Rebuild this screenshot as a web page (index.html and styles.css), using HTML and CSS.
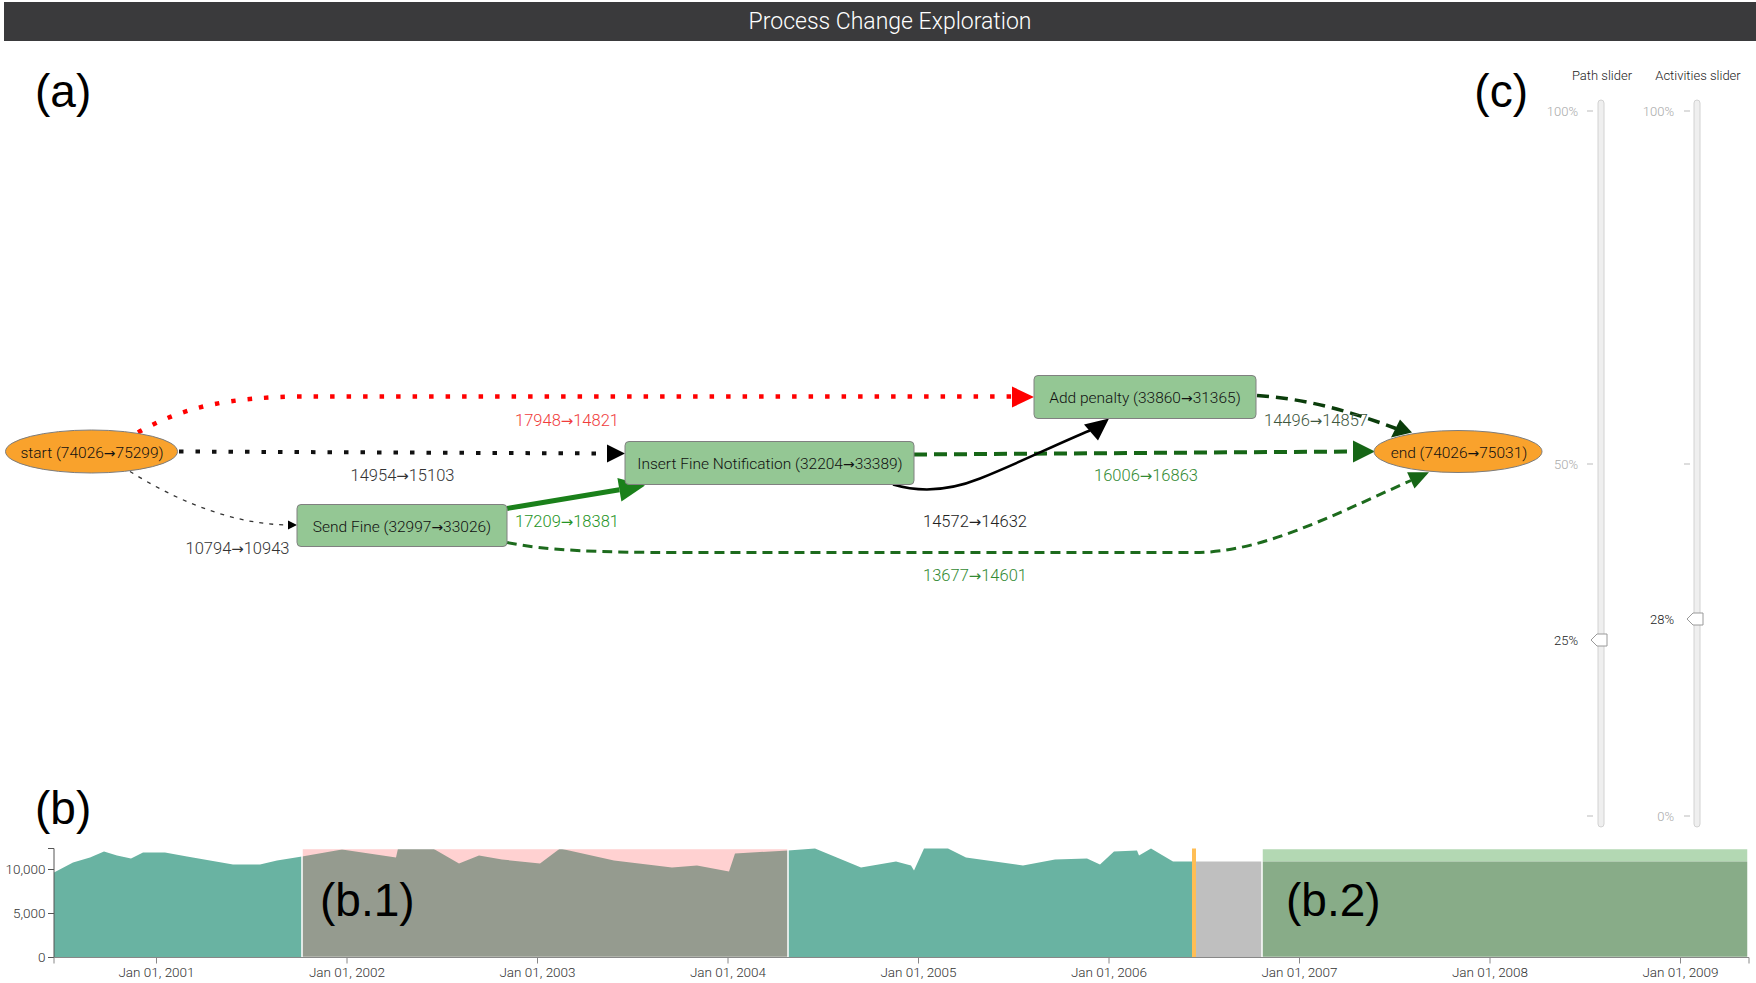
FILE: index.html
```html
<!DOCTYPE html>
<html lang="en">
<head>
<meta charset="utf-8">
<title>Process Change Exploration</title>
<link rel="stylesheet" href="styles.css">
</head>
<body>
<header class="topbar"><h1 class="topbar-title">Process Change Exploration</h1></header>

<main class="workspace">
  <section class="graph-panel">
    <div class="panel-labels">
      <span class="panel-tag">(a)</span>
      <span class="panel-tag panel-tag-c">(c)</span>
    </div>
    <svg class="graph" width="1554" height="656.5" viewBox="0 116.5 1554 656.5">
      <!-- edges -->
      <path class="edge e-red" d="M138,432 C185,405 232,397 300,396 L1012,396"/>
      <polygon class="head-red" points="1012,386 1034,396.5 1012,407"/>

      <path class="edge e-blackdot" d="M179,451 L607,453"/>
      <polygon class="head-black" points="607,444 625,453 607,462"/>

      <path class="edge e-thin" d="M130,471 C170,496 228,524 289,524.5"/>
      <polygon class="head-black" points="288,520 297,524.5 288,529"/>

      <path class="edge e-green" d="M507,508 L619.4,489.3"/>
      <polygon class="head-green" points="621.4,501.1 645,485 617.4,477.5"/>

      <path class="edge e-green-bottom" d="M507,542 C545,550 600,552 680,552 L1195,552 C1262,552 1330,516 1411,480"/>
      <polygon class="head-green-dark" points="1414.5,488.1 1429,471.7 1407.1,471.7"/>

      <path class="edge e-green-mid" d="M914,454 L1353,451"/>
      <polygon class="head-green-dark" points="1353,440 1375,451 1353,462"/>

      <path class="edge e-black" d="M893,484 C920,492 950,490 980,478 C1020,462 1058,443 1090,430"/>
      <polygon class="head-black" points="1098,440 1109,418 1084,424"/>

      <path class="edge e-darkgreen" d="M1257,395 C1300,398 1340,407 1396,428"/>
      <polygon class="head-darkest" points="1391,437 1412,432 1400,419"/>

      <!-- nodes -->
      <ellipse class="node-event" cx="91.5" cy="451" rx="86" ry="21.5"/>
      <rect class="node-activity" x="297" y="504" width="210" height="42" rx="4"/>
      <rect class="node-activity" x="625" y="441" width="289" height="43" rx="4"/>
      <rect class="node-activity" x="1034" y="375" width="222" height="43" rx="4"/>
      <ellipse class="node-event" cx="1458" cy="451" rx="84" ry="21"/>

      <text class="node-label" x="92" y="457">start (74026<tspan class="arr">→</tspan>75299)</text>
      <text class="node-label" x="402" y="531">Send Fine (32997<tspan class="arr">→</tspan>33026)</text>
      <text class="node-label" x="770" y="468.5">Insert Fine Notification (32204<tspan class="arr">→</tspan>33389)</text>
      <text class="node-label" x="1145" y="402.5">Add penalty (33860<tspan class="arr">→</tspan>31365)</text>
      <text class="node-label" x="1459" y="457">end (74026<tspan class="arr">→</tspan>75031)</text>

      <!-- edge labels -->
      <text class="edge-label lbl-red" x="567" y="425">17948<tspan class="arr">→</tspan>14821</text>
      <text class="edge-label lbl-gray" x="402.5" y="480.7">14954<tspan class="arr">→</tspan>15103</text>
      <text class="edge-label lbl-gray" x="237.5" y="553.7">10794<tspan class="arr">→</tspan>10943</text>
      <text class="edge-label lbl-green" x="567" y="526.2">17209<tspan class="arr">→</tspan>18381</text>
      <text class="edge-label lbl-dark" x="975" y="526.2">14572<tspan class="arr">→</tspan>14632</text>
      <text class="edge-label lbl-green2" x="1146" y="480.7">16006<tspan class="arr">→</tspan>16863</text>
      <text class="edge-label lbl-green2" x="975" y="580.7">13677<tspan class="arr">→</tspan>14601</text>
      <text class="edge-label lbl-greengray" x="1316" y="425.7">14496<tspan class="arr">→</tspan>14857</text>
    </svg>
    <div class="panel-label-b"><span class="panel-tag">(b)</span></div>
  </section>

  <aside class="sliders">
    <div class="slider">
      <div class="slider-title">Path slider</div>
      <svg class="slider-svg" width="96" height="749.5" viewBox="1554 84 96 749.5">
        <rect class="track" x="1598" y="100" width="6" height="727" rx="3"/>
        <line class="tick" x1="1587" y1="111" x2="1593" y2="111"/>
        <line class="tick" x1="1587" y1="464" x2="1593" y2="464"/>
        <line class="tick" x1="1587" y1="816" x2="1593" y2="816"/>
        <text class="tick-label" x="1578" y="115.6">100%</text>
        <text class="tick-label" x="1578" y="468.6">50%</text>
        <polygon class="handle" points="1591,640 1597,634 1607,634 1607,646 1597,646"/>
        <text class="handle-label" x="1578" y="644.6">25%</text>
      </svg>
    </div>
    <div class="slider">
      <div class="slider-title">Activities slider</div>
      <svg class="slider-svg" width="96" height="749.5" viewBox="1650 84 96 749.5">
        <rect class="track" x="1694" y="100" width="6" height="727" rx="3"/>
        <line class="tick" x1="1684" y1="111" x2="1690" y2="111"/>
        <line class="tick" x1="1684" y1="464" x2="1690" y2="464"/>
        <line class="tick" x1="1684" y1="816" x2="1690" y2="816"/>
        <text class="tick-label" x="1674" y="115.6">100%</text>
        <text class="tick-label" x="1674" y="820.6">0%</text>
        <polygon class="handle" points="1687,619 1693,613 1703,613 1703,625 1693,625"/>
        <text class="handle-label" x="1674" y="623.6">28%</text>
      </svg>
    </div>
  </aside>
</main>

<section class="timeline">
  <svg class="chart" width="1756" height="149.5" viewBox="0 833.5 1756 149.5">
    <defs>
      <clipPath id="sel1"><rect x="302" y="848" width="486" height="109"/></clipPath>
      <path id="areaShape" d="M54,957 L54,872 L73,862 L90,857 L104,851 L117,855 L131,858 L143,852 L165,852 L187,856 L233,864 L260,864 L277,860 L302,856 L342,849 L396,857 L398,848 L433,848 L459,863 L479,855 L502,859 L540,863 L560,848 L614,860 L672,867 L697,865 L729,871 L735,853 L788,850 L815,848 L861,867 L896,861 L911,865 L914,870 L924,848 L948,848 L966,857 L1023,865 L1055,859 L1087,858 L1100,864 L1114,851 L1137,850 L1139,855 L1151,848 L1173,861 L1192,861 L1192,957 Z"/>
    </defs>
    <use href="#areaShape" class="area"/>
    <rect class="sel1-bg" x="302" y="848" width="486" height="109"/>
    <use href="#areaShape" class="area-sel1" clip-path="url(#sel1)"/>
    <rect class="sel-border" x="302" y="848" width="486" height="109"/>

    <rect class="gap" x="1192" y="861" width="70" height="96"/>
    <rect class="marker" x="1192" y="848" width="4" height="109"/>

    <rect class="sel2-top" x="1262" y="848" width="486" height="13"/>
    <rect class="sel2-body" x="1262" y="861" width="486" height="96"/>
    <rect class="sel-border" x="1262" y="848" width="486" height="109"/>

    <text class="sel-tag" x="320" y="915">(b.1)</text>
    <text class="sel-tag" x="1286" y="915">(b.2)</text>

    <path class="axis-y" d="M48,848 H54 V957 H48"/>
    <line class="axis-y" x1="48" y1="869" x2="54" y2="869"/>
    <line class="axis-y" x1="48" y1="913" x2="54" y2="913"/>
    <text class="axis-label y-label" x="45.5" y="873.8">10,000</text>
    <text class="axis-label y-label" x="45.5" y="917.8">5,000</text>
    <text class="axis-label y-label" x="45.5" y="961.8">0</text>

    <path class="axis-x" d="M54,963 V957 H1749 V963"/>
    <g class="axis-x">
      <line x1="156.5" y1="957" x2="156.5" y2="963"/>
      <line x1="347" y1="957" x2="347" y2="963"/>
      <line x1="537.5" y1="957" x2="537.5" y2="963"/>
      <line x1="728" y1="957" x2="728" y2="963"/>
      <line x1="918.5" y1="957" x2="918.5" y2="963"/>
      <line x1="1109" y1="957" x2="1109" y2="963"/>
      <line x1="1299.5" y1="957" x2="1299.5" y2="963"/>
      <line x1="1490" y1="957" x2="1490" y2="963"/>
      <line x1="1680.5" y1="957" x2="1680.5" y2="963"/>
    </g>
    <text class="axis-label x-label" x="156.5" y="976">Jan 01, 2001</text>
    <text class="axis-label x-label" x="347" y="976">Jan 01, 2002</text>
    <text class="axis-label x-label" x="537.5" y="976">Jan 01, 2003</text>
    <text class="axis-label x-label" x="728" y="976">Jan 01, 2004</text>
    <text class="axis-label x-label" x="918.5" y="976">Jan 01, 2005</text>
    <text class="axis-label x-label" x="1109" y="976">Jan 01, 2006</text>
    <text class="axis-label x-label" x="1299.5" y="976">Jan 01, 2007</text>
    <text class="axis-label x-label" x="1490" y="976">Jan 01, 2008</text>
    <text class="axis-label x-label" x="1680.5" y="976">Jan 01, 2009</text>
  </svg>
</section>
</body>
</html>
```

FILE: styles.css
```css
* { box-sizing: border-box; }
html, body { margin: 0; padding: 0; background: #ffffff; }
body {
  width: 1756px;
  height: 983px;
  overflow: hidden;
  font-family: "Liberation Sans", Arial, Helvetica, sans-serif;
}

.light {
  font-family: Roboto, "Liberation Sans", sans-serif;
  font-weight: 300;
}

.topbar {
  margin: 2px 0 0 4px;
  height: 39px;
  background: #3a3a3c;
  display: flex;
  align-items: center;
  justify-content: center;
}
.topbar-title {
  margin: 0;
  padding-left: 20px;
  font-family: Roboto, "Liberation Sans", sans-serif;
  font-size: 23px;
  font-weight: 300;
  color: #ffffff;
  line-height: 26px;
}

.workspace {
  display: grid;
  grid-template-columns: 1554px 202px;
  height: 792.5px;
}

.graph-panel { display: flex; flex-direction: column; }
.panel-labels {
  display: flex;
  justify-content: space-between;
  padding: 23.5px 26px 0 35px;
  height: 75.5px;
}
.panel-tag {
  font-size: 46px;
  line-height: 52px;
  color: #000;
}
.graph { display: block; }
.panel-label-b { padding: 8.5px 0 0 35px; height: 60.5px; }

/* graph */
.edge { fill: none; }
.e-red { stroke: #ff0000; stroke-width: 4.5; stroke-dasharray: 4.5 12; }
.e-blackdot { stroke: #111; stroke-width: 4; stroke-dasharray: 4.5 12; }
.e-thin { stroke: #333; stroke-width: 1.3; stroke-dasharray: 4 6; }
.e-green { stroke: #1a801a; stroke-width: 5; }
.e-green-bottom { stroke: #1d6b1d; stroke-width: 3; stroke-dasharray: 10 6; }
.e-green-mid { stroke: #166616; stroke-width: 4; stroke-dasharray: 13 7; }
.e-black { stroke: #000; stroke-width: 2.5; }
.e-darkgreen { stroke: #0b3d0b; stroke-width: 3.5; stroke-dasharray: 12 7; }
.head-red { fill: #ff0000; }
.head-black { fill: #000; }
.head-green { fill: #1a801a; }
.head-green-dark { fill: #166616; }
.head-darkest { fill: #0b3d0b; }

.node-event { fill: #f9a22c; stroke: #7d7d7d; stroke-width: 1; }
.node-activity { fill: #94c794; stroke: #808080; stroke-width: 1; }
.node-label {
  font-family: Roboto, "Liberation Sans", sans-serif;
  font-weight: 300;
  font-size: 15.5px;
  fill: #111;
  text-anchor: middle;
}
.edge-label {
  font-family: Roboto, "Liberation Sans", sans-serif;
  font-weight: 300;
  font-size: 16.5px;
  text-anchor: middle;
}
.arr { font-family: "DejaVu Sans", sans-serif; font-weight: normal; font-size: 0.9em; }
.lbl-red { fill: #f03c3c; }
.lbl-gray { fill: #333; }
.lbl-dark { fill: #222; }
.lbl-green { fill: #259425; }
.lbl-green2 { fill: #338a33; }
.lbl-greengray { fill: #3e563e; }

/* sliders */
.sliders { display: flex; padding-top: 27px; }
.slider { width: 96px; display: flex; flex-direction: column; align-items: center; }
.slider-title {
  font-family: Roboto, "Liberation Sans", sans-serif;
  font-weight: 300;
  font-size: 13px;
  line-height: 16px;
  color: #222;
  white-space: nowrap;
}
.slider-svg { display: block; overflow: visible; }
.track { fill: #efefef; stroke: #d2d2d2; stroke-width: 1; }
.tick { stroke: #bbbbbb; stroke-width: 1; }
.tick-label {
  font-family: Roboto, "Liberation Sans", sans-serif;
  font-weight: 300;
  font-size: 13px;
  fill: #aaa;
  text-anchor: end;
}
.handle { fill: #ffffff; stroke: #9a9a9a; stroke-width: 1; }
.handle-label {
  font-family: Roboto, "Liberation Sans", sans-serif;
  font-weight: 300;
  font-size: 13px;
  fill: #222;
  text-anchor: end;
}

/* timeline */
.timeline { height: 149.5px; }
.chart { display: block; }
.area { fill: #69b3a2; }
.sel1-bg { fill: #ffd1d1; }
.area-sel1 { fill: #959b8f; }
.sel-border { fill: none; stroke: #ffffff; stroke-width: 1.5; }
.gap { fill: #bfbfbf; }
.marker { fill: #ffbe55; }
.sel2-top { fill: #b3d8b3; }
.sel2-body { fill: #88ac88; }
.sel-tag { font-size: 46px; fill: #000; }
.axis-y { fill: none; stroke: #555; stroke-width: 1; }
.axis-x { fill: none; stroke: #888; stroke-width: 1; }
.axis-label {
  font-family: Roboto, "Liberation Sans", sans-serif;
  font-weight: 300;
  font-size: 13.5px;
  fill: #333;
}
.y-label { text-anchor: end; }
.x-label { text-anchor: middle; }
```
